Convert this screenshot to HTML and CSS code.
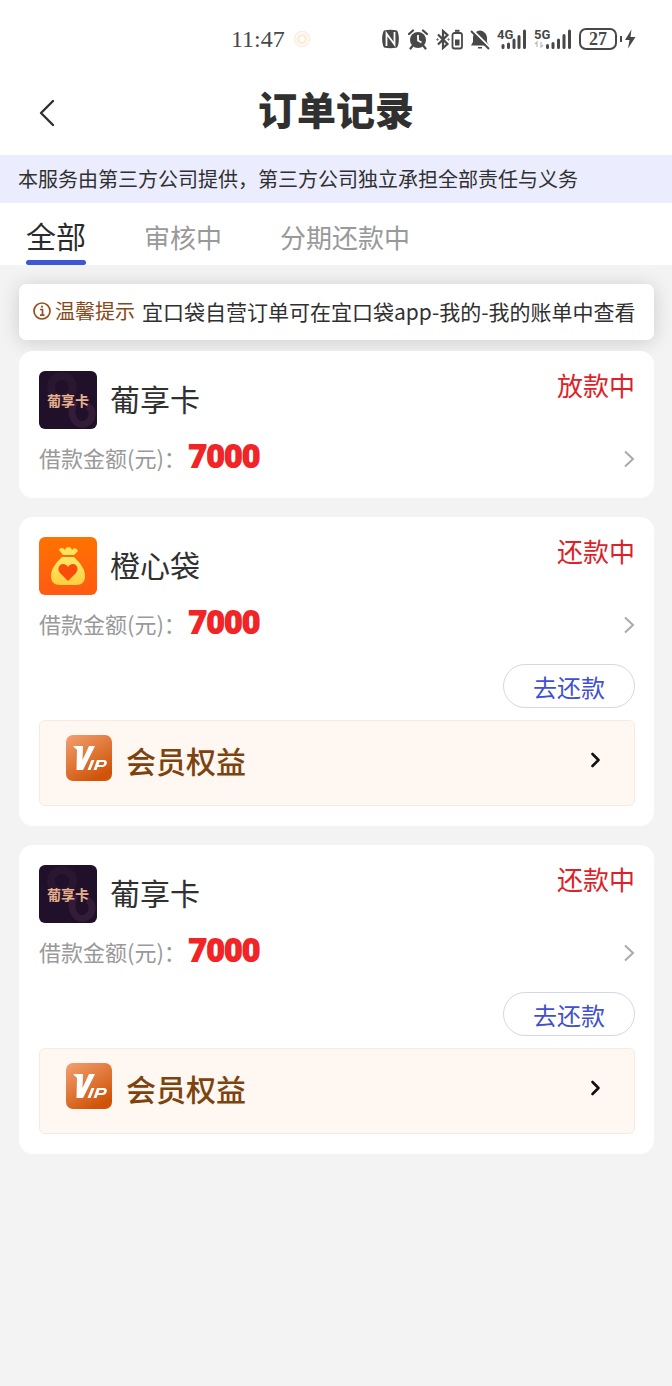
FILE: index.html
```html
<!DOCTYPE html>
<html lang="zh-CN">
<head>
<meta charset="utf-8">
<meta name="viewport" content="width=device-width, initial-scale=1">
<title>订单记录</title>
<link rel="stylesheet" href="styles.css">
</head>
<body>
<svg class="defs" aria-hidden="true">
  <defs>
    <linearGradient id="vip-fill" x1="0" y1="0" x2="0.6" y2="1"><stop offset="0" stop-color="#f3a071"/><stop offset="1" stop-color="#cf5408"/></linearGradient>
    <linearGradient id="orange-fill" x1="0" y1="0" x2="0" y2="1"><stop offset="0" stop-color="#ff7200"/><stop offset="1" stop-color="#ff5a12"/></linearGradient>
    <linearGradient id="bag-fill" x1="0" y1="0" x2="0" y2="1"><stop offset="0" stop-color="#ffe868"/><stop offset="1" stop-color="#ffcf3e"/></linearGradient>
    <symbol id="chevron" viewBox="0 0 12 18"><path d="M2 1.5 10 9 2 16.5" fill="none" stroke="currentColor" stroke-width="2"/></symbol>
    <symbol id="chevron-bold" viewBox="0 0 12 18"><path d="M2.5 3 8.5 9 2.5 15" fill="none" stroke="currentColor" stroke-width="2.6" stroke-linecap="round" stroke-linejoin="round"/></symbol>
  </defs>
</svg>

<header class="top">
  <div class="status-bar">
    <div class="clock">
      <span>11:47</span>
      <svg width="18" height="18" viewBox="0 0 18 18" fill="none" stroke="#fbeedb"><circle cx="9" cy="9" r="7.5" stroke-width="1.5"/><circle cx="9" cy="9" r="4" stroke-width="3"/></svg>
    </div>
    <div class="indicators">
      <svg width="19" height="20" viewBox="0 0 19 20"><path d="M3 1.5C7 .5 12 .5 16 1.5 18.5 5 18.5 15 16 18.5 12 19.5 7 19.5 3 18.5 .5 15 .5 5 3 1.5Z" fill="#484848"/><path d="M5.5 17V4.5L13.5 15.5V3" fill="none" stroke="#fff" stroke-width="1.8"/></svg>
      <svg width="22" height="21" viewBox="0 0 22 21"><circle cx="11" cy="11" r="8" fill="#484848"/><path d="M2 5 6 1.5M20 5 16 1.5M5.5 17 3.5 19.5M16.5 17 18.5 19.5" stroke="#484848" stroke-width="2.2" stroke-linecap="round"/><path d="M11 6V11.5L14.5 13.5" fill="none" stroke="#fff" stroke-width="1.8"/></svg>
      <svg width="27" height="21" viewBox="0 0 27 21" fill="none" stroke="#484848"><path d="M2 5.5 11.5 15 7 19V2L11.5 6 2 15.5" stroke-width="2.2"/><circle cx="1.5" cy="10.5" r=".7"/><circle cx="12.5" cy="10.5" r=".7"/><rect x="16.5" y="4" width="9.5" height="15.5" rx="2" stroke-width="1.8"/><path d="M19 1.8H23.5" stroke-width="2"/><rect x="19.5" y="11" width="3.5" height="5" fill="#484848"/></svg>
      <svg width="20" height="21" viewBox="0 0 20 21"><path d="M10 1.5C14 2 17 5 17 9V13L19 16.5H1L3 13V9C3 5 6 2 10 1.5ZM8 18H12V19.5H8Z" fill="#484848"/><path d="M2 .5 20 18.5" stroke="#fff" stroke-width="2"/><path d="M1 2 19 20" stroke="#484848" stroke-width="2"/></svg>
      <svg width="30" height="22" viewBox="0 0 30 22"><text x="0" y="11" class="network">4G</text><path d="M6 17.5V19.5M11.5 16V19.5M17 12V19.5M22 8.5V19.5M27.5 3V19.5" stroke="#484848" stroke-width="3" stroke-linecap="round"/></svg>
      <svg width="38" height="22" viewBox="0 0 38 22"><text x="0" y="11" class="network">5G</text><path d="M3 19V14L1 16M7 14V19L9 17" fill="none" stroke="#bbb" stroke-width="1.2"/><path d="M13.5 17.5V19.5M19 15.5V19.5M24.5 12V19.5M30 7.5V19.5M35.5 3V19.5" stroke="#484848" stroke-width="3" stroke-linecap="round"/></svg>
      <div class="battery">27</div>
      <svg width="16" height="22" viewBox="0 0 16 22"><path d="M0 8V14" stroke="#484848" stroke-width="4"/><path d="M11.5 1.5 5 12H9.5L8 20.5 15.5 9H10.5Z" fill="#484848"/></svg>
    </div>
  </div>
  <div class="title-bar">
    <button class="back" type="button" aria-label="返回"><svg width="18" height="28" viewBox="0 0 18 28"><path d="M15 2 3 14 15 26" fill="none" stroke="currentColor" stroke-width="2.4" stroke-linecap="round" stroke-linejoin="round"/></svg></button>
    <h1 class="title">订单记录</h1>
  </div>
</header>

<p class="notice">本服务由第三方公司提供，第三方公司独立承担全部责任与义务</p>

<nav class="tabs" aria-label="订单状态">
  <button class="tab tab-active" type="button" aria-current="true">全部</button>
  <button class="tab" type="button">审核中</button>
  <button class="tab" type="button">分期还款中</button>
</nav>

<main class="orders">
  <p class="tip">
    <svg width="20" height="20" viewBox="0 0 20 20" fill="none" stroke="#97511f" stroke-width="1.7"><circle cx="10" cy="10" r="8"/><path d="M8 8.5H10.5V14M8 14.2H12.5M9 5.7H11"/></svg>
    <span class="tip-label">温馨提示</span>
    <span class="tip-text">宜口袋自营订单可在宜口袋app-我的-我的账单中查看</span>
  </p>

  <article class="card">
    <div class="card-head">
      <svg class="logo" viewBox="0 0 58 58"><rect width="58" height="58" rx="6" fill="#211029"/><circle cx="23" cy="16" r="11" fill="none" stroke="#291630" stroke-width="8"/><path d="M36 30C28 45 38 56 46 53S56 38 48 35" fill="none" stroke="#321c38" stroke-width="7"/><text x="29" y="35" class="logo-text">葡享卡</text></svg>
      <h2 class="name">葡享卡</h2>
      <span class="state">放款中</span>
    </div>
    <a class="amount" href="#"><span class="amount-label">借款金额(元)：</span><strong class="amount-value">7000</strong><svg class="arrow" width="12" height="18"><use href="#chevron"/></svg></a>
  </article>

  <article class="card">
    <div class="card-head">
      <svg class="logo" viewBox="0 0 58 58"><rect width="58" height="58" rx="6" fill="url(#orange-fill)"/><path d="M20 13C21 10 25 11 26 13 27 9 32 9 33 13 35 10 38 11 39 14L35 18H24Z" fill="#ffe45c"/><path d="M23 20H35C40 25 46 31 46 39 46 45 43 48 37 48H21C15 48 12 45 12 39 12 31 18 25 23 20Z" fill="url(#bag-fill)"/><path d="M29 44 21 36C16 30 24 23 29 30 34 23 42 30 37 36Z" fill="#fa4b0b"/></svg>
      <h2 class="name">橙心袋</h2>
      <span class="state">还款中</span>
    </div>
    <a class="amount" href="#"><span class="amount-label">借款金额(元)：</span><strong class="amount-value">7000</strong><svg class="arrow" width="12" height="18"><use href="#chevron"/></svg></a>
    <button class="repay" type="button">去还款</button>
    <a class="benefit" href="#">
      <svg class="vip" viewBox="0 0 46 46"><rect width="46" height="46" rx="7" fill="url(#vip-fill)"/><path d="M7 11H17L16.5 25 23 11H29L17 35H10.5L11 15Z" fill="#fff"/><path d="M25.5 25H28.5L24.5 35H21.5ZM31 25H38C42 25 42 31 37 32H31.5L30.5 35H27.5ZM33.5 27 32.5 30H36C38.5 30 39 27 37 27Z" fill="#fff" fill-rule="evenodd"/></svg>
      <span class="benefit-name">会员权益</span>
      <svg class="benefit-arrow" width="12" height="18"><use href="#chevron-bold"/></svg>
    </a>
  </article>

  <article class="card">
    <div class="card-head">
      <svg class="logo" viewBox="0 0 58 58"><rect width="58" height="58" rx="6" fill="#211029"/><circle cx="23" cy="16" r="11" fill="none" stroke="#291630" stroke-width="8"/><path d="M36 30C28 45 38 56 46 53S56 38 48 35" fill="none" stroke="#321c38" stroke-width="7"/><text x="29" y="35" class="logo-text">葡享卡</text></svg>
      <h2 class="name">葡享卡</h2>
      <span class="state">还款中</span>
    </div>
    <a class="amount" href="#"><span class="amount-label">借款金额(元)：</span><strong class="amount-value">7000</strong><svg class="arrow" width="12" height="18"><use href="#chevron"/></svg></a>
    <button class="repay" type="button">去还款</button>
    <a class="benefit" href="#">
      <svg class="vip" viewBox="0 0 46 46"><rect width="46" height="46" rx="7" fill="url(#vip-fill)"/><path d="M7 11H17L16.5 25 23 11H29L17 35H10.5L11 15Z" fill="#fff"/><path d="M25.5 25H28.5L24.5 35H21.5ZM31 25H38C42 25 42 31 37 32H31.5L30.5 35H27.5ZM33.5 27 32.5 30H36C38.5 30 39 27 37 27Z" fill="#fff" fill-rule="evenodd"/></svg>
      <span class="benefit-name">会员权益</span>
      <svg class="benefit-arrow" width="12" height="18"><use href="#chevron-bold"/></svg>
    </a>
  </article>
</main>
</body>
</html>
```

FILE: styles.css
```css
* { box-sizing: border-box; }

body {
  margin: 0;
  background: #f3f3f3;
  color: #303030;
  font-family: "Noto Sans CJK SC", sans-serif;
  font-weight: 400;
}

h1, h2, p { margin: 0; }
button { border: 0; padding: 0; background: none; color: inherit; font: inherit; cursor: pointer; }
a { color: inherit; text-decoration: none; }
svg { display: block; flex: none; }
.defs { position: absolute; width: 0; height: 0; }

.top { background: #fff; }

.status-bar {
  display: flex;
  justify-content: space-between;
  align-items: center;
  height: 76px;
  padding: 2px 36px 0 231px;
}
.clock {
  display: flex;
  align-items: center;
  gap: 8px;
  color: #484848;
  font: 24px/28px "Liberation Serif", serif;
}
.indicators { display: flex; align-items: center; gap: 7px; }
.network { font: 700 13px Roboto, sans-serif; fill: #484848; }
.battery {
  width: 38px;
  height: 22px;
  border: 2px solid #484848;
  border-radius: 7px;
  color: #484848;
  font: 700 18px/18px "Liberation Serif", serif;
  text-align: center;
}
.battery + svg { margin-left: -4px; }

.title-bar {
  display: grid;
  grid-template-columns: 60px 1fr 60px;
  align-items: start;
  height: 79px;
  padding-top: 8px;
}
.back { display: flex; justify-content: flex-end; padding: 15px 4px 0 0; }
.title { font-size: 39px; line-height: 48px; font-weight: 900; text-align: center; }

.notice {
  padding: 8px 18px;
  background: #ebedfe;
  font-size: 20px;
  line-height: 32px;
}

.tabs { display: flex; gap: 58px; height: 62px; padding: 0 26px; background: #fff; }
.tab {
  height: 62px;
  padding-top: 8px;
  border-bottom: 3px solid transparent;
  color: #999;
  font-size: 26px;
  line-height: 48px;
}
.tab-active {
  display: flex;
  flex-direction: column;
  justify-content: space-between;
  border: 0;
  color: #2b2b2b;
  font-size: 30px;
}
.tab-active::after { content: ""; width: 100%; height: 5px; border-radius: 3px; background: #3d56d8; }

.orders { padding: 19px 18px 20px 19px; }

.tip {
  display: flex;
  align-items: center;
  height: 56px;
  margin-bottom: 11px;
  padding: 0 13px 2px;
  border-radius: 7px;
  background: #fff;
  box-shadow: 0 2px 20px rgb(0 0 0 / 16%);
  font-size: 20px;
  line-height: 30px;
  white-space: nowrap;
}
.tip-label { margin: 0 7px 0 3px; color: #874819; }
.tip-text { font-size: 21px; }

.card {
  display: flex;
  flex-direction: column;
  margin-bottom: 19px;
  padding: 20px 19px 20px 20px;
  border-radius: 14px;
  background: #fff;
}
.card:first-of-type { padding-bottom: 16px; }
.card-head { display: flex; gap: 13px; height: 58px; }
.logo { width: 58px; height: 58px; }
.logo-text { font: 700 14px "Noto Sans CJK SC", sans-serif; fill: #e6b08d; text-anchor: middle; }
.name { flex: 1; font-size: 30px; line-height: 54px; font-weight: 400; }
.state { color: #dc2228; font-size: 26px; line-height: 28px; }

.amount { display: flex; align-items: center; height: 50px; margin-top: 3px; }
.amount-label { width: 150px; color: #999; font-size: 22px; line-height: 50px; white-space: nowrap; }
.amount-value {
  color: #f12426;
  font: 700 31px/46px Roboto, sans-serif;
  -webkit-text-stroke: 2px #f12426;
}
.arrow { margin: 4px 0 0 auto; color: #aaa; }

.repay {
  align-self: flex-end;
  width: 132px;
  height: 44px;
  margin-top: 16px;
  border: 1px solid #d3d8e8;
  border-radius: 22px;
  color: #3f50d0;
  font-size: 24px;
  line-height: 44px;
}

.benefit {
  display: flex;
  align-items: center;
  gap: 14px;
  height: 86px;
  margin-top: 12px;
  padding: 0 32px 6px 26px;
  border: 1px solid #fbe9dd;
  border-radius: 6px;
  background: #fff7f1;
}
.vip { width: 46px; height: 46px; margin-bottom: 4px; }
.benefit-name { flex: 1; color: #7d430e; font-size: 30px; line-height: 44px; font-weight: 500; }
.benefit-arrow { color: #111; }
```
